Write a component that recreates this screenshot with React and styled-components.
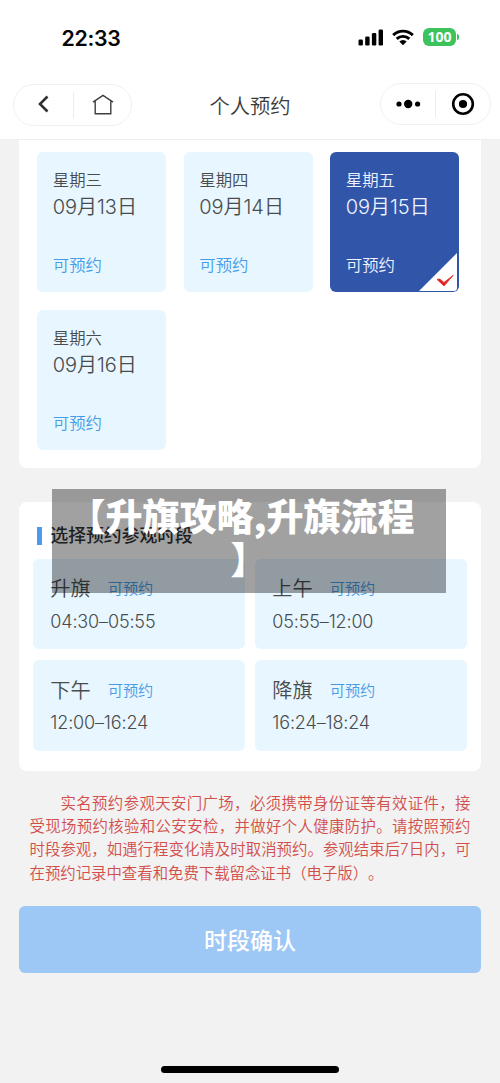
import React from 'react';
import styled, { createGlobalStyle } from 'styled-components';

const Global = createGlobalStyle`
  * { box-sizing: border-box; }
  body {
    margin: 0;
    background: #f2f2f2;
    font-family: Inter, "Noto Sans CJK SC", sans-serif;
    color: #484c4d;
    text-spacing-trim: space-all;
  }
`;

const Screen = styled.main`
  position: relative;
  width: 500px;
  height: 1083px;
  overflow: hidden;
  background: #f2f2f2;
  display: flex;
  flex-direction: column;
`;

const Header = styled.header`
  height: 140px;
  flex: none;
  background: #fff;
  border-bottom: 1px solid #efefef;
`;

const StatusBar = styled.div`
  height: 75px;
  display: flex;
  justify-content: space-between;
  align-items: center;
  padding: 0 41px 0 61.5px;
`;

const Clock = styled.span`
  font-size: 21.3px;
  font-weight: 600;
  line-height: 26px;
  letter-spacing: -0.3px;
  color: #050505;
`;

const StatusIcons = styled.div`
  display: flex;
  align-items: center;
  margin-top: -1px;
`;

const Battery = styled.span`
  display: flex;
  align-items: center;
  margin-left: 9px;
`;

const BatteryBody = styled.span`
  width: 33px;
  height: 18px;
  border-radius: 6px;
  background: #3cc35c;
  color: #fff;
  font: 700 14px/18px "Open Sans", sans-serif;
  text-align: center;
`;

const BatteryTip = styled.span`
  width: 2px;
  height: 6px;
  margin-left: 1px;
  border-radius: 0 2px 2px 0;
  background: #3cc35c;
`;

const NavBar = styled.nav`
  height: 60px;
  display: grid;
  grid-template-columns: 119px 1fr 111px;
  padding: 0 9px 0 13px;
  align-items: center;
`;

const Capsule = styled.div`
  height: 42px;
  border: 1px solid #f1f1f1;
  border-radius: 21px;
  display: flex;
  align-items: center;
  margin-top: ${(p) => p.$drop}px;
`;

const CapsuleButton = styled.button`
  flex: ${(p) => p.$grow || 1};
  height: 26px;
  padding: 0;
  border: 0;
  border-left: ${(p) => (p.$divided ? '1px solid #ececec' : '0')};
  background: none;
  display: flex;
  align-items: center;
  justify-content: center;
`;

const NavTitle = styled.h1`
  margin: 3px 0 0 -12px;
  font-size: 20.3px;
  line-height: 30px;
  font-weight: 350;
  text-align: center;
  color: #38393a;
`;

const Body = styled.div`
  padding: 0 19px;
`;

const Panel = styled.section`
  background: #fff;
  border-radius: ${(p) => (p.$open ? '0 0 8px 8px' : '8px')};
`;

const DayGrid = styled(Panel)`
  height: 328px;
  padding: 12.3px 22px 0 18px;
  display: grid;
  grid-template-columns: repeat(3, 129px);
  grid-auto-rows: 140px;
  justify-content: space-between;
  align-content: start;
  row-gap: 17.7px;
`;

const DayCard = styled.div`
  position: relative;
  border-radius: 6px;
  padding: 17.2px 0 0 15.8px;
  background: ${(p) => (p.$selected ? '#3155a9' : '#e8f6ff')};
  color: ${(p) => (p.$selected ? '#eef3ff' : '#484c4d')};
  display: flex;
  flex-direction: column;
`;

const Weekday = styled.span`
  font-size: 16.4px;
  line-height: 22px;
  font-weight: 350;
`;

const DateText = styled.span`
  font-size: 20px;
  line-height: 32px;
  font-weight: 350;
  letter-spacing: -0.05px;
  white-space: nowrap;
`;

const DayState = styled.span`
  margin-top: 31px;
  font-size: 16.4px;
  line-height: 22px;
  font-weight: 350;
  color: ${(p) => (p.$selected ? '#eef3ff' : '#459de8')};
`;

const Corner = styled.svg`
  position: absolute;
  right: 2px;
  bottom: 1px;
`;

const SlotPanel = styled(Panel)`
  margin-top: 33.5px;
  height: 269.5px;
  padding: 24px 14px 0 14px;
`;

const SlotHeading = styled.h2`
  margin: 0;
  height: 33px;
  padding: 1.5px 0 0 4px;
  display: flex;
  align-items: flex-start;
  gap: 8.5px;
  font-size: 17.8px;
  line-height: 17px;
  font-weight: 500;
  color: #303234;
`;

const HeadingBar = styled.i`
  width: 5px;
  height: 18px;
  background: #4b9cf0;
`;

const SlotGrid = styled.div`
  display: grid;
  grid-template-columns: 1fr 1fr;
  grid-auto-rows: 90.5px;
  gap: 11px 10px;
`;

const Slot = styled.div`
  border-radius: 6px;
  background: #e8f6ff;
  padding: 14.5px 0 0 17.3px;
`;

const SlotTop = styled.div`
  display: flex;
  align-items: center;
  gap: 17px;
  height: 32px;
`;

const SlotName = styled.span`
  font-size: 20.2px;
  line-height: 30px;
  font-weight: 350;
`;

const SlotState = styled.span`
  font-size: 15.2px;
  line-height: 24px;
  font-weight: 350;
  color: #459de8;
`;

const SlotTime = styled.div`
  margin-top: 3.5px;
  font-size: 18px;
  line-height: 26px;
  font-weight: 350;
  letter-spacing: -0.15px;
  white-space: nowrap;
`;

const Notice = styled.p`
  margin: 21px 10.5px 0 10.5px;
  font-size: 15.4px;
  line-height: 23.2px;
  font-weight: 350;
  color: #d24e4b;
`;

const NoticeLine = styled.span`
  display: block;
  white-space: nowrap;
  text-align-last: ${(p) => (p.$last ? 'left' : 'justify')};
  padding-left: ${(p) => (p.$indent ? '31px' : '0')};
`;

const Confirm = styled.button`
  display: block;
  width: 100%;
  height: 66.5px;
  margin-top: 21.5px;
  padding: 3px 0 0;
  border: 0;
  border-radius: 6px;
  background: #9dc7f5;
  color: #fff;
  font: 500 23px/34px Inter, "Noto Sans CJK SC", sans-serif;
`;

const HomeIndicator = styled.div`
  position: absolute;
  left: 161px;
  bottom: 10px;
  width: 178px;
  height: 7px;
  border-radius: 4px;
  background: #000;
`;

const Banner = styled.div`
  position: absolute;
  left: 52px;
  top: 489px;
  width: 394px;
  height: 104px;
  padding-top: 5px;
  background: rgba(0, 0, 0, 0.37);
  color: #fff;
  font: 900 37px/43px "Noto Sans CJK SC", sans-serif;
  text-align: center;
`;

const BannerLine = styled.span`
  display: block;
  white-space: nowrap;
  margin-left: ${(p) => p.$shift || 0}px;
`;

const days = [
  ['星期三', '09月13日'],
  ['星期四', '09月14日'],
  ['星期五', '09月15日', true],
  ['星期六', '09月16日'],
];

const slots = [
  ['升旗', '04:30–05:55'],
  ['上午', '05:55–12:00'],
  ['下午', '12:00–16:24'],
  ['降旗', '16:24–18:24'],
];

const notice = [
  '实名预约参观天安门广场，必须携带身份证等有效证件，接',
  '受现场预约核验和公安安检，并做好个人健康防护。请按照预约',
  '时段参观，如遇行程变化请及时取消预约。参观结束后7日内，可',
  '在预约记录中查看和免费下载留念证书（电子版）。',
];

const Signal = () => (
  <svg width="26" height="17" viewBox="0 0 26 17">
    <rect x="0.5" y="10.5" width="4.4" height="6" rx="1.3" />
    <rect x="7.2" y="7.5" width="4.4" height="9" rx="1.3" />
    <rect x="13.9" y="4" width="4.4" height="12.5" rx="1.3" />
    <rect x="20.6" y="0.5" width="4.4" height="16" rx="1.3" />
  </svg>
);

const WifiSvg = styled.svg`
  margin-left: 8px;
`;

const Wifi = () => (
  <WifiSvg width="22" height="17" viewBox="0 0 22 17">
    <g fill="none" stroke="#000" strokeWidth="2.9">
      <path d="M1.2 6.1a14 14 0 0 1 19.6 0" />
      <path d="M4.7 9.9a9 9 0 0 1 12.6 0" />
    </g>
    <path d="M7.3 12.6a5.3 5.3 0 0 1 7.4 0L11 16.3z" />
  </WifiSvg>
);

export default function App() {
  return (
    <Screen>
      <Global />
      <Header>
        <StatusBar>
          <Clock>22:33</Clock>
          <StatusIcons>
            <Signal />
            <Wifi />
            <Battery>
              <BatteryBody>100</BatteryBody>
              <BatteryTip />
            </Battery>
          </StatusIcons>
        </StatusBar>
        <NavBar>
          <Capsule $drop={0}>
            <CapsuleButton $grow={1.04} aria-label="返回">
              <svg width="12" height="20" viewBox="0 0 12 20">
                <path d="M9.5 1.5L2 9l7.5 7.5" fill="none" stroke="#303133" strokeWidth="2.6" />
              </svg>
            </CapsuleButton>
            <CapsuleButton $divided aria-label="首页">
              <svg width="22" height="22" viewBox="0 0 22 22">
                <path
                  d="M1 8.2L11 1.3l10 6.9M3.2 7v12.7h15.6V7"
                  fill="none"
                  stroke="#3e3e3e"
                  strokeWidth="1.4"
                />
              </svg>
            </CapsuleButton>
          </Capsule>
          <NavTitle>个人预约</NavTitle>
          <Capsule $drop={-2}>
            <CapsuleButton aria-label="更多">
              <svg width="26" height="10" viewBox="0 0 26 10">
                <circle cx="4" cy="5" r="2.6" />
                <circle cx="13.2" cy="5" r="4.2" />
                <circle cx="22.6" cy="5" r="2.6" />
              </svg>
            </CapsuleButton>
            <CapsuleButton $divided aria-label="关闭">
              <svg width="24" height="24" viewBox="0 0 24 24">
                <circle cx="12" cy="12" r="9.8" fill="none" stroke="#000" strokeWidth="2.6" />
                <circle cx="12" cy="12" r="4.1" />
              </svg>
            </CapsuleButton>
          </Capsule>
        </NavBar>
      </Header>

      <Body>
        <DayGrid $open>
          {days.map(([week, date, selected]) => (
            <DayCard key={date} $selected={selected}>
              <Weekday>{week}</Weekday>
              <DateText>{date}</DateText>
              <DayState $selected={selected}>可预约</DayState>
              {selected && (
                <Corner width="38" height="38" viewBox="0 0 38 38">
                  <path d="M38 0v35a3 3 0 0 1-3 3H0z" fill="#fff" />
                  <path d="M18 26.4l7 6.6 9.3-10.8-9.3 7.2-4.2-3.4z" fill="#e3231f" stroke="#e3231f" strokeWidth="0.7" />
                </Corner>
              )}
            </DayCard>
          ))}
        </DayGrid>

        <SlotPanel>
          <SlotHeading>
            <HeadingBar />
            选择预约参观时段
          </SlotHeading>
          <SlotGrid>
            {slots.map(([name, time]) => (
              <Slot key={name}>
                <SlotTop>
                  <SlotName>{name}</SlotName>
                  <SlotState>可预约</SlotState>
                </SlotTop>
                <SlotTime>{time}</SlotTime>
              </Slot>
            ))}
          </SlotGrid>
        </SlotPanel>

        <Notice>
          {notice.map((line, i) => (
            <NoticeLine key={line} $indent={i === 0} $last={i === 3}>
              {line}
            </NoticeLine>
          ))}
        </Notice>

        <Confirm>时段确认</Confirm>
      </Body>

      <Banner>
        <BannerLine $shift={-15}>【升旗攻略,升旗流程</BannerLine>
        <BannerLine>】</BannerLine>
      </Banner>
      <HomeIndicator />
    </Screen>
  );
}
